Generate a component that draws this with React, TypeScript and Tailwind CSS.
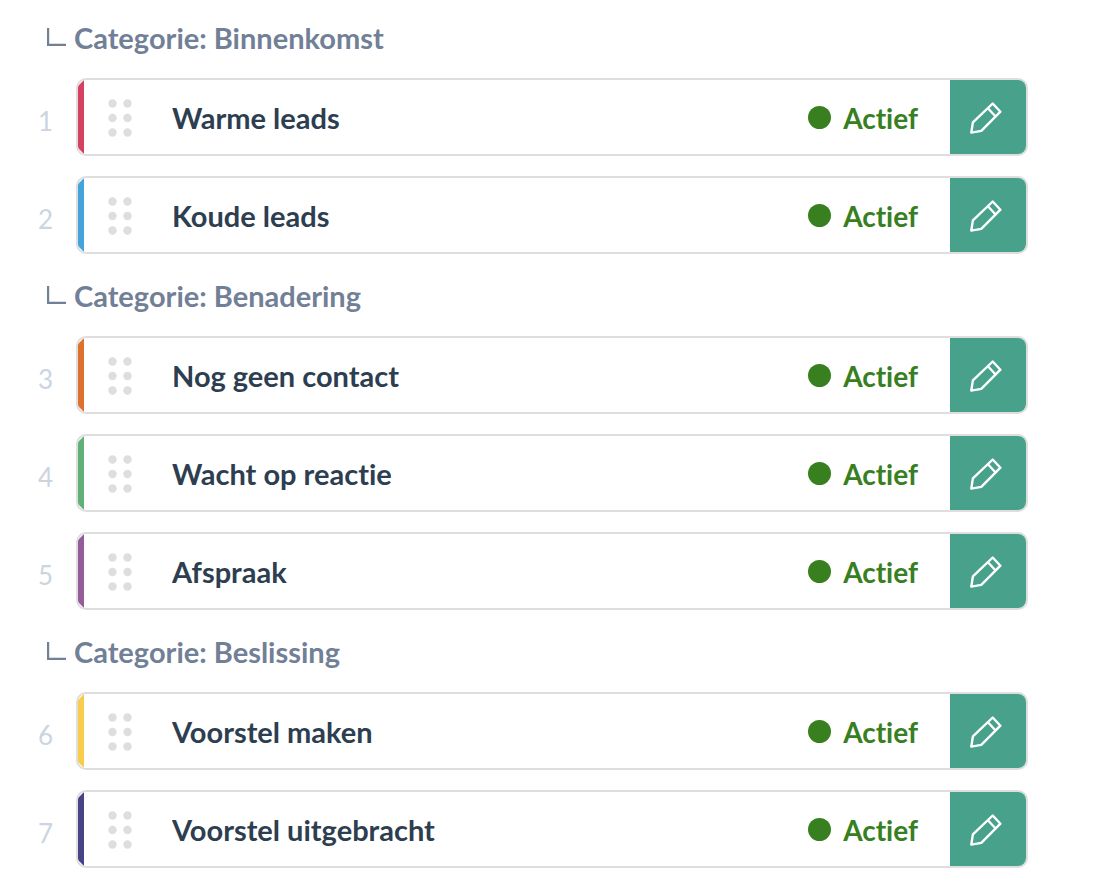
interface Status {
  position: number;
  name: string;
  color: string;
}

interface Category {
  name: string;
  statuses: Status[];
}

const categories: Category[] = [
  {
    name: 'Binnenkomst',
    statuses: [
      { position: 1, name: 'Warme leads', color: 'bg-[#d64161]' },
      { position: 2, name: 'Koude leads', color: 'bg-[#45a3da]' },
    ],
  },
  {
    name: 'Benadering',
    statuses: [
      { position: 3, name: 'Nog geen contact', color: 'bg-[#dd7230]' },
      { position: 4, name: 'Wacht op reactie', color: 'bg-[#60b077]' },
      { position: 5, name: 'Afspraak', color: 'bg-[#955b9b]' },
    ],
  },
  {
    name: 'Beslissing',
    statuses: [
      { position: 6, name: 'Voorstel maken', color: 'bg-[#f7cd4b]' },
      { position: 7, name: 'Voorstel uitgebracht', color: 'bg-[#484287]' },
    ],
  },
];

function CornerIcon() {
  return (
    <svg className="mr-2 h-5 w-5 shrink-0" viewBox="0 0 20 20" fill="none" stroke="currentColor" strokeWidth="2.2" aria-hidden="true">
      <path d="M2.1 -0.5V16.9H20" />
    </svg>
  );
}

function DragHandle() {
  return (
    <svg className="h-[38px] w-6" viewBox="0 0 24 38" fill="#dedede" aria-hidden="true">
      <circle cx="4.5" cy="4.5" r="4.2" />
      <circle cx="19.5" cy="4.5" r="4.2" />
      <circle cx="4.5" cy="19" r="4.2" />
      <circle cx="19.5" cy="19" r="4.2" />
      <circle cx="4.5" cy="33.5" r="4.2" />
      <circle cx="19.5" cy="33.5" r="4.2" />
    </svg>
  );
}

function PencilIcon() {
  return (
    <svg className="h-8 w-8" viewBox="0 0 32 32" fill="none" stroke="currentColor" strokeWidth="2.4" strokeLinejoin="round" aria-hidden="true">
      <path d="M22.7 1.5 30.4 9.7 11.3 28.9 1.3 30.6 2.9 20.4Z" />
      <path d="M17.9 6.3 25.6 14.5" />
    </svg>
  );
}

function StatusRow({ status }: { status: Status }) {
  return (
    <li className="flex items-center">
      <span className="w-[38px] shrink-0 pt-2 text-[26px] leading-8 font-normal text-[#cbd5e0]">{status.position}</span>
      <div className="flex h-[78px] min-w-0 flex-1 items-stretch overflow-hidden rounded-[10px] border-2 border-[#dedede] bg-white">
        {/* Color stripe */}
        <div className={`w-1.5 shrink-0 [clip-path:polygon(0_6px,100%_0,100%_100%,0_calc(100%-6px))] ${status.color}`} />
        <button type="button" aria-label={`${status.name} verplaatsen`} className="shrink-0 cursor-move pt-0.5 pr-10 pl-6">
          <DragHandle />
        </button>
        <span className="min-w-0 flex-1 self-center truncate pt-0.5 text-[29px] leading-9 text-[#2d3e50]">{status.name}</span>
        <div className="flex shrink-0 items-center gap-3 pt-0.5 pr-8 text-[28px] leading-9 text-[#38801f]">
          <span className="mb-0.5 h-[23px] w-[23px] rounded-full bg-[#38801f]" />
          Actief
        </div>
        <button
          type="button"
          aria-label={`${status.name} bewerken`}
          className="flex w-[76px] shrink-0 cursor-pointer items-center bg-[#48a18b] pt-0.5 pl-5 text-white"
        >
          <PencilIcon />
        </button>
      </div>
    </li>
  );
}

export default function App() {
  return (
    <main className="bg-white pt-5 pr-[90px] pb-7 pl-[38px] font-['Lato','Liberation_Sans',sans-serif] font-bold [font-variant-ligatures:none]">
      {categories.map((category) => (
        <section key={category.name} className="mb-6">
          <h2 className="mb-[22px] flex items-center pl-2 text-[29px] leading-9 text-[#718096]">
            <CornerIcon />
            Categorie: {category.name}
          </h2>
          <ul className="flex flex-col gap-5">
            {category.statuses.map((status) => (
              <StatusRow key={status.position} status={status} />
            ))}
          </ul>
        </section>
      ))}
    </main>
  );
}
